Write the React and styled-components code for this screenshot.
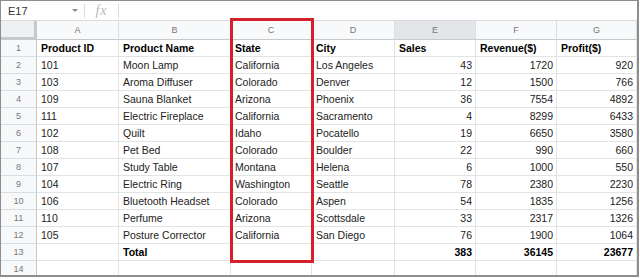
import React from "react";
import styled, { createGlobalStyle } from "styled-components";

const Global = createGlobalStyle`
  html, body { margin: 0; padding: 0; background: #fff; }
  body { font-family: "Liberation Sans", Arial, sans-serif; }
`;

const COLS = [36, 82, 112, 81, 83, 81, 81, 80];

const Frame = styled.div`
  position: relative;
  box-sizing: border-box;
  width: 639px;
  height: 277px;
  border-top: 1px solid #8e8e8e;
  border-left: 1px solid #8e8e8e;
  border-right: 2px solid #8e8e8e;
  border-bottom: 2px solid #8e8e8e;
  overflow: hidden;
  background: #fff;
`;

const FormulaBar = styled.div`
  box-sizing: border-box;
  height: 20px;
  display: flex;
  align-items: center;
  border-bottom: 1px solid #dadce0;
  font-size: 11px;
  color: #333;
`;

const NameBox = styled.div`
  width: 83px;
  box-sizing: border-box;
  padding-left: 7px;
  display: flex;
  align-items: center;
  justify-content: space-between;
  padding-right: 6px;
`;

const Caret = styled.span`
  width: 0;
  height: 0;
  border-left: 3px solid transparent;
  border-right: 3px solid transparent;
  border-top: 3px solid #8a8a8a;
`;

const Sep = styled.div`
  width: 1px;
  height: 14px;
  background: #dadce0;
`;

const Fx = styled.span`
  width: 33px;
  text-align: center;
  font-family: "Liberation Serif", "Times New Roman", serif;
  font-style: italic;
  font-size: 14px;
  color: #b9b9b9;
  letter-spacing: 1px;
`;

const Grid = styled.div`
  display: grid;
  grid-template-columns: ${COLS.map((c) => c + "px").join(" ")};
  grid-auto-rows: 17px;
  grid-template-rows: 19px;
`;

const Cell = styled.div`
  box-sizing: border-box;
  border-right: 1px solid #e2e3e3;
  border-bottom: 1px solid #e2e3e3;
  font-size: 10.5px;
  line-height: 16px;
  padding: 0 3px 0 4px;
  white-space: nowrap;
  overflow: hidden;
  color: ${(p) => (p.$bold ? "#000" : "#222")};
  font-weight: ${(p) => (p.$bold ? 700 : 400)};
  text-align: ${(p) => (p.$num ? "right" : "left")};
`;

const Corner = styled.div`
  box-sizing: border-box;
  background: #eef0f1;
  border-right: 3px solid #c6c8ca;
  border-bottom: 3px solid #c6c8ca;
`;

const ColHead = styled.div`
  box-sizing: border-box;
  background: ${(p) => (p.$selected ? "#e3e5e8" : "#f8f9fa")};
  border-right: 1px solid #dcdde0;
  border-bottom: 1px solid #c6c8ca;
  font-size: 9px;
  color: #777;
  text-align: center;
  line-height: 18px;
`;

const RowHead = styled.div`
  box-sizing: border-box;
  background: #f8f9fa;
  border-right: 1px solid #c6c8ca;
  border-bottom: 1px solid #dcdde0;
  font-size: 9px;
  color: #777;
  text-align: center;
  line-height: 16px;
`;

const Highlight = styled.div`
  position: absolute;
  left: 229px;
  top: 17px;
  width: 84px;
  height: 245px;
  box-sizing: border-box;
  border: 3px solid #d4202c;
  pointer-events: none;
`;

const letters = ["A", "B", "C", "D", "E", "F", "G"];

const data = [
  ["101", "Moon Lamp", "California", "Los Angeles", 43, 1720, 920],
  ["103", "Aroma Diffuser", "Colorado", "Denver", 12, 1500, 766],
  ["109", "Sauna Blanket", "Arizona", "Phoenix", 36, 7554, 4892],
  ["111", "Electric Fireplace", "California", "Sacramento", 4, 8299, 6433],
  ["102", "Quilt", "Idaho", "Pocatello", 19, 6650, 3580],
  ["108", "Pet Bed", "Colorado", "Boulder", 22, 990, 660],
  ["107", "Study Table", "Montana", "Helena", 6, 1000, 550],
  ["104", "Electric Ring", "Washington", "Seattle", 78, 2380, 2230],
  ["106", "Bluetooth Headset", "Colorado", "Aspen", 54, 1835, 1256],
  ["110", "Perfume", "Arizona", "Scottsdale", 33, 2317, 1326],
  ["105", "Posture Corrector", "California", "San Diego", 76, 1900, 1064],
];

const headers = ["Product ID", "Product Name", "State", "City", "Sales", "Revenue($)", "Profit($)"];

export default function App() {
  const rows = [];
  rows.push({ cells: headers, bold: true, num: false });
  data.forEach((r) => rows.push({ cells: r }));
  rows.push({ cells: ["", "Total", "", "", 383, 36145, 23677], bold: true });
  rows.push({ cells: ["", "", "", "", "", "", ""] });

  return (
    <>
      <Global />
      <Frame>
        <FormulaBar>
          <NameBox>
            <span>E17</span>
            <Caret />
          </NameBox>
          <Sep />
          <Fx>fx</Fx>
          <Sep />
        </FormulaBar>
        <Grid>
          <Corner />
          {letters.map((l) => (
            <ColHead key={l} $selected={l === "E"}>
              {l}
            </ColHead>
          ))}
          {rows.map((row, i) => (
            <React.Fragment key={i}>
              <RowHead>{i + 1}</RowHead>
              {row.cells.map((c, j) => (
                <Cell key={j} $bold={row.bold} $num={typeof c === "number"}>
                  {c}
                </Cell>
              ))}
            </React.Fragment>
          ))}
        </Grid>
        <Highlight />
      </Frame>
    </>
  );
}
